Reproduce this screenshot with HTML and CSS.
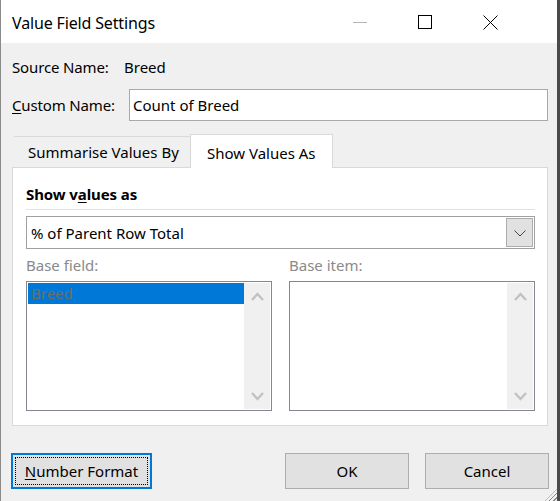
FILE: index.html
```html
<!DOCTYPE html>
<html>
<head>
<meta charset="utf-8">
<link rel="stylesheet" href="styles.css">
</head>
<body>
<div class="window">
  <div class="titlebar">
    <div class="title">Value Field Settings</div>
    <div class="controls">
      <div class="ctl"><svg width="15" height="15" viewBox="0 0 15 15"><line x1="0" y1="7.5" x2="14" y2="7.5" stroke="#b4b4b4" stroke-width="1"/></svg></div>
      <div class="ctl"><svg width="15" height="15" viewBox="0 0 15 15"><rect x="0.5" y="0.5" width="13" height="13" fill="none" stroke="#000" stroke-width="1"/></svg></div>
      <div class="ctl"><svg width="15" height="15" viewBox="0 0 15 15"><path d="M0.5 0.5 L14.5 14.5 M14.5 0.5 L0.5 14.5" stroke="#000" stroke-width="1"/></svg></div>
    </div>
  </div>
  <div class="content">
    <div class="row source">
      <span class="lbl">Source Name:</span><span class="val">Breed</span>
    </div>
    <div class="row custom">
      <span class="lbl"><u>C</u>ustom Name:</span>
      <div class="input">Count of Breed</div>
    </div>
    <div class="tabs">
      <div class="tab">Summarise Values By</div>
      <div class="tab active">Show Values As</div>
    </div>
    <div class="panel">
      <div class="heading">Show v<u>a</u>lues as</div>
      <div class="sep"></div>
      <div class="select">
        <span>% of Parent Row Total</span>
        <div class="dropbtn"><svg width="12" height="7" viewBox="0 0 12 7"><path d="M0.5 0.5 L6 6 L11.5 0.5" fill="none" stroke="#444" stroke-width="1"/></svg></div>
      </div>
      <div class="lists">
        <div class="col">
          <div class="caption">Base field:</div>
          <div class="listbox">
            <div class="items"><div class="item sel">Breed</div></div>
            <div class="scroll">
              <svg width="13" height="9" viewBox="0 0 13 9"><path d="M1 8 L6.5 2 L12 8" fill="none" stroke="#c2c2c2" stroke-width="2.4"/></svg>
              <svg width="13" height="9" viewBox="0 0 13 9"><path d="M1 1 L6.5 7 L12 1" fill="none" stroke="#c2c2c2" stroke-width="2.4"/></svg>
            </div>
          </div>
        </div>
        <div class="col">
          <div class="caption">Base item:</div>
          <div class="listbox">
            <div class="items"></div>
            <div class="scroll">
              <svg width="13" height="9" viewBox="0 0 13 9"><path d="M1 8 L6.5 2 L12 8" fill="none" stroke="#c2c2c2" stroke-width="2.4"/></svg>
              <svg width="13" height="9" viewBox="0 0 13 9"><path d="M1 1 L6.5 7 L12 1" fill="none" stroke="#c2c2c2" stroke-width="2.4"/></svg>
            </div>
          </div>
        </div>
      </div>
    </div>
    <div class="buttons">
      <div class="btn focus"><div class="focusrect"><u>N</u>umber Format</div></div>
      <div class="spacer"></div>
      <div class="btn ok">OK</div>
      <div class="btn cancel">Cancel</div>
    </div>
  </div>
  <div class="grip"></div>
</div>
</body>
</html>
```
FILE: styles.css
```css
* { box-sizing: border-box; }
html, body { margin: 0; padding: 0; }
body {
  width: 560px;
  height: 501px;
  overflow: hidden;
  font-family: "Noto Sans", "Open Sans", sans-serif;
  font-size: 15px;
  color: #000;
  background: #f0f0f0;
}
u { text-decoration: underline; text-underline-offset: 2px; }
.window {
  position: relative;
  width: 560px;
  height: 501px;
  border-left: 1px solid #8a8a8a;
  border-right: 3px solid #4a4a4a;
  background: #f0f0f0;
  display: flex;
  flex-direction: column;
}
.titlebar {
  height: 43px;
  background: #fff;
  display: flex;
  align-items: center;
  justify-content: space-between;
  padding-left: 11px;
}
.title {
  font-size: 16px;
  letter-spacing: -0.15px;
  padding-top: 2px;
}
.controls {
  display: flex;
  height: 43px;
  padding-right: 34px;
}
.ctl {
  width: 65px;
  display: flex;
  align-items: center;
  justify-content: center;
  padding-top: 1px;
}
.content {
  padding-left: 11px;
  padding-right: 8px;
  display: flex;
  flex-direction: column;
}
.row { display: flex; align-items: center; }
.source { height: 20px; margin-top: 14px; }
.source .lbl { width: 112px; letter-spacing: -0.15px; }
.custom { margin-top: 12px; height: 32px; }
.custom .lbl { width: 117px; letter-spacing: -0.15px; }
.input {
  flex: 1;
  height: 32px;
  border: 1px solid #a9a9a9;
  background: #fff;
  padding: 3px 3px 0 3px;
  line-height: 24px;
  margin-right: 1px;
}
.tabs {
  margin-top: 13px;
  height: 33px;
  display: flex;
  align-items: flex-end;
  padding-left: 2px;
  position: relative;
  z-index: 1;
}
.tab {
  height: 31px;
  border-top: 1px solid #d9d9d9;
  padding: 5px 0 0 14px;
  line-height: 20px;
  width: 176px;
}
.tab.active {
  height: 34px;
  width: 143px;
  background: #fff;
  border: 1px solid #d9d9d9;
  border-bottom: none;
  padding: 8px 0 0 16px;
  margin-bottom: -1px;
}
.panel {
  width: 536px;
  height: 259px;
  background: #fff;
  border: 1px solid #d9d9d9;
  padding: 15px 12px 0 13px;
}
.heading {
  font-weight: bold;
  height: 22px;
  line-height: 22px;
  letter-spacing: -0.1px;
}
.sep {
  margin-top: 4px;
  height: 1px;
  background: #e1e1e1;
}
.select {
  margin-top: 6px;
  height: 33px;
  border: 1px solid #a0a0a0;
  display: flex;
  align-items: center;
  justify-content: space-between;
  padding-left: 4px;
  padding-right: 1px;
}
.dropbtn {
  width: 27px;
  height: 29px;
  background: #e1e1e1;
  border: 1px solid #adadad;
  display: flex;
  align-items: center;
  justify-content: center;
  padding-top: 2px;
}
.lists {
  display: flex;
  justify-content: space-between;
  margin-top: 6px;
}
.col { width: 246px; }
.caption {
  color: #8a8a8a;
  height: 20px;
  line-height: 20px;
  margin-bottom: 6px;
}
.listbox {
  height: 130px;
  border: 1px solid #828790;
  display: flex;
  padding: 1px;
}
.items { flex: 1; }
.item {
  height: 21px;
  line-height: 21px;
  padding-left: 3px;
  color: #6d6d6d;
}
.item.sel { background: #0078d7; }
.scroll {
  width: 26px;
  background: #f0f0f0;
  display: flex;
  flex-direction: column;
  align-items: center;
  justify-content: space-between;
  padding: 9px 0 8px 0;
}
.buttons {
  display: flex;
  margin-top: 27px;
  height: 36px;
  margin-left: -1px;
}
.btn {
  height: 36px;
  background: #e1e1e1;
  border: 1px solid #adadad;
  display: flex;
  align-items: center;
  justify-content: center;
}
.btn.focus {
  width: 141px;
  border: 2px solid #0078d7;
  padding: 2px;
}
.focusrect {
  width: 100%;
  height: 100%;
  border: 1px dotted #000;
  display: flex;
  align-items: center;
  justify-content: center;
}
.spacer { flex: 1; }
.btn.ok { width: 124px; }
.btn.cancel { width: 124px; margin-left: 16px; }
.grip {
  position: absolute;
  right: 0;
  bottom: 0;
  width: 12px;
  height: 12px;
  background: repeating-linear-gradient(135deg, transparent 0 2px, #8a8a8a 2px 3px);
  clip-path: polygon(100% 0, 100% 100%, 0 100%);
}
```
